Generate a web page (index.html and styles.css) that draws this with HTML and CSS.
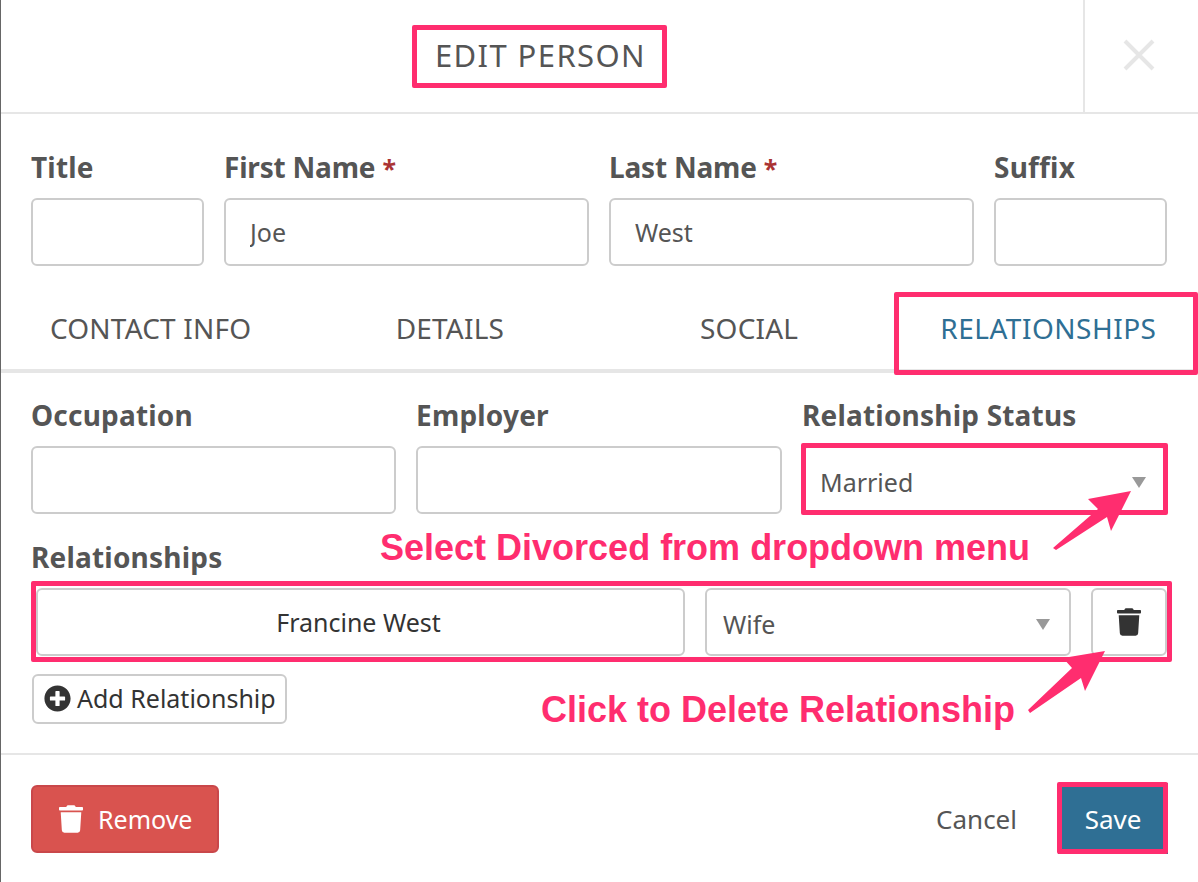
FILE: index.html
```html
<!DOCTYPE html>
<html lang="en">
<head>
	<meta charset="UTF-8">
	<meta name="viewport" content="width=device-width, initial-scale=1.0">
	<title>Edit Person</title>
	<link rel="stylesheet" href="styles.css">
</head>
<body>
	<div class="modal">
		<header class="modal-header">
			<h1 class="modal-title">EDIT PERSON</h1>
			<div class="modal-close">
				<svg viewBox="0 0 32 32" class="close-icon"><path d="M2 2 L30 30 M30 2 L2 30"/></svg>
			</div>
		</header>

		<div class="name-row">
			<div class="field">
				<label>Title</label>
				<input type="text">
			</div>
			<div class="field">
				<label class="required">First Name <span class="req">*</span></label>
				<input type="text" value="Joe">
			</div>
			<div class="field">
				<label class="required">Last Name <span class="req">*</span></label>
				<input type="text" value="West">
			</div>
			<div class="field">
				<label>Suffix</label>
				<input type="text">
			</div>
		</div>

		<nav class="tabs">
			<div class="tab">CONTACT INFO</div>
			<div class="tab">DETAILS</div>
			<div class="tab">SOCIAL</div>
			<div class="tab active">RELATIONSHIPS</div>
		</nav>

		<div class="info-row">
			<div class="field">
				<label>Occupation</label>
				<input type="text">
			</div>
			<div class="field">
				<label>Employer</label>
				<input type="text">
			</div>
			<div class="field">
				<label>Relationship Status</label>
				<div class="select">Married<span class="caret"></span></div>
			</div>
		</div>

		<div class="relationships">
			<label>Relationships</label>
			<div class="relationship-row">
				<div class="person-name">Francine West</div>
				<div class="select">Wife<span class="caret"></span></div>
				<div class="icon-btn">
					<svg viewBox="0 0 448 512" class="trash"><path d="M432 32H312l-9.4-18.7A24 24 0 0 0 281.1 0H166.8a23.72 23.72 0 0 0-21.4 13.3L136 32H16A16 16 0 0 0 0 48v32a16 16 0 0 0 16 16h416a16 16 0 0 0 16-16V48a16 16 0 0 0-16-16zM53.2 467a48 48 0 0 0 47.9 45h245.8a48 48 0 0 0 47.9-45L416 128H32z"/></svg>
				</div>
			</div>
			<button class="add-btn">
				<svg viewBox="0 0 512 512" class="plus"><path d="M256 8C119 8 8 119 8 256s111 248 248 248 248-111 248-248S393 8 256 8zm144 276c0 6.6-5.4 12-12 12h-92v92c0 6.6-5.4 12-12 12h-56c-6.6 0-12-5.4-12-12v-92h-92c-6.6 0-12-5.4-12-12v-56c0-6.6 5.4-12 12-12h92v-92c0-6.6 5.4-12 12-12h56c6.6 0 12 5.4 12 12v92h92c6.6 0 12 5.4 12 12v56z"/></svg>
				Add Relationship
			</button>
		</div>

		<footer class="modal-footer">
			<button class="remove-btn">
				<svg viewBox="0 0 448 512" class="trash-white"><path d="M432 32H312l-9.4-18.7A24 24 0 0 0 281.1 0H166.8a23.72 23.72 0 0 0-21.4 13.3L136 32H16A16 16 0 0 0 0 48v32a16 16 0 0 0 16 16h416a16 16 0 0 0 16-16V48a16 16 0 0 0-16-16zM53.2 467a48 48 0 0 0 47.9 45h245.8a48 48 0 0 0 47.9-45L416 128H32z"/></svg>
				Remove
			</button>
			<div class="footer-right">
				<a class="cancel">Cancel</a>
				<button class="save-btn">Save</button>
			</div>
		</footer>
	</div>

	<!-- annotations drawn on top of the screenshot -->
	<div class="mark mark-title"></div>
	<div class="mark mark-tab"></div>
	<div class="mark mark-status"></div>
	<div class="mark mark-row"></div>
	<div class="mark mark-save"></div>
	<div class="note note-status">Select Divorced from dropdown menu</div>
	<div class="note note-delete">Click to Delete Relationship</div>
	<svg class="arrows" viewBox="0 0 1198 882">
		<polygon points="1131,491 1111,531 1107,517 1056,550 1053,548 1098,509 1088,499"/>
		<polygon points="1105,651 1085,691 1081,678 1030,713 1028,710 1072,668 1063,658"/>
	</svg>
</body>
</html>
```

FILE: styles.css
```css
* {
	box-sizing: border-box;
}

html, body {
	margin: 0;
	height: 882px;
	overflow: hidden;
}

body {
	position: relative;
	background: #fff;
	font-family: "Noto Sans", Arial, sans-serif;
	color: #555;
}

.modal {
	width: 1198px;
	height: 882px;
	border-left: 1px solid #666;
	display: flex;
	flex-direction: column;
}

.modal-header {
	display: flex;
	height: 114px;
	border-bottom: 2px solid #e6e6e6;
}

.modal-title {
	flex: 1;
	margin: 0;
	padding-right: 3px;
	font-size: 31px;
	font-weight: 400;
	line-height: 110px;
	text-align: center;
	letter-spacing: 1.4px;
	color: #555;
}

.modal-close {
	width: 115px;
	border-left: 2px solid #e6e6e6;
	display: flex;
	align-items: center;
	padding-left: 38px;
}

.close-icon {
	width: 32px;
	height: 32px;
	margin-top: -2px;
	fill: none;
	stroke: #e6e6e6;
	stroke-width: 4;
}

label {
	display: block;
	height: 38px;
	font-size: 28px;
	font-weight: 700;
	line-height: 38px;
	letter-spacing: 0.2px;
	white-space: nowrap;
	color: #555;
}

label.required {
	letter-spacing: -0.2px;
}

.req {
	font-size: 25px;
	color: #a33;
}

input[type="text"] {
	display: block;
	width: 100%;
	height: 68px;
	padding: 0 24px;
	border: 2px solid #ccc;
	border-radius: 6px;
	font-family: inherit;
	font-size: 25px;
	color: #555;
	background: #fff;
}

.name-row {
	display: grid;
	grid-template-columns: 173px 365px 365px 173px;
	gap: 20px;
	padding: 34px 30px 0;
}

.field label {
	margin-bottom: 12px;
}

.tabs {
	display: grid;
	grid-template-columns: repeat(4, 1fr);
	margin-top: 26px;
	height: 81px;
	border-bottom: 4px solid #e6e6e6;
}

.tab {
	text-align: center;
	font-size: 28px;
	line-height: 73px;
	letter-spacing: 0.2px;
	color: #555;
}

.tab.active {
	letter-spacing: 0.5px;
	color: #2f6f94;
}

.info-row {
	display: grid;
	grid-template-columns: 365px 366px 365px;
	gap: 20px;
	padding: 23px 30px 0;
}

.select {
	position: relative;
	height: 68px;
	padding: 0 16px;
	border: 2px solid #ccc;
	border-radius: 6px;
	font-size: 25px;
	line-height: 68px;
	color: #555;
	background: #fff;
}

.caret {
	position: absolute;
	right: 19px;
	top: 29px;
	width: 0;
	height: 0;
	border-left: 7px solid transparent;
	border-right: 7px solid transparent;
	border-top: 11px solid #999;
}

.relationships {
	padding: 24px 30px 0;
}

.relationships label {
	margin-bottom: 12px;
}

.relationship-row {
	display: flex;
	gap: 20px;
	height: 68px;
	margin-left: 5px;
	margin-right: 1px;
}

.person-name {
	width: 649px;
	height: 68px;
	padding-right: 4px;
	border: 2px solid #ccc;
	border-radius: 6px;
	text-align: center;
	font-size: 25px;
	line-height: 64px;
	color: #333;
}

.relationship-row .select {
	width: 366px;
}

.icon-btn {
	width: 76px;
	height: 68px;
	border: 2px solid #ccc;
	border-radius: 6px;
	display: flex;
	align-items: center;
	justify-content: center;
}

.trash {
	width: 24px;
	height: 28px;
	fill: #333;
}

.add-btn {
	display: flex;
	align-items: center;
	gap: 6px;
	height: 50px;
	width: 255px;
	margin-top: 18px;
	margin-left: 1px;
	padding: 0 10px 2px;
	border: 2px solid #ccc;
	border-radius: 6px;
	background: #fff;
	font-family: inherit;
	font-size: 25px;
	white-space: nowrap;
	color: #333;
}

.plus {
	width: 27px;
	height: 27px;
	flex: none;
	fill: #333;
}

.modal-footer {
	display: flex;
	align-items: center;
	justify-content: space-between;
	height: 128px;
	margin-top: 29px;
	padding: 0 30px;
	border-top: 2px solid #e6e6e6;
}

.remove-btn {
	display: flex;
	align-items: center;
	gap: 15px;
	width: 188px;
	height: 68px;
	margin-top: 2px;
	padding: 0 26px;
	border: 2px solid #c9474a;
	border-radius: 6px;
	background: #d9534f;
	font-family: inherit;
	font-size: 25px;
	color: #fff;
}

.trash-white {
	width: 24px;
	height: 28px;
	flex: none;
	fill: #fff;
}

.footer-right {
	display: flex;
	align-items: center;
	gap: 41px;
}

.cancel {
	padding-top: 2px;
	font-size: 26px;
	color: #555;
}

.save-btn {
	width: 110px;
	height: 71px;
	padding-top: 3px;
	border: 0;
	background: #2f6f94;
	font-family: inherit;
	font-size: 26px;
	color: #fff;
}

/* annotations */
.mark {
	position: absolute;
	border: 5px solid #ff2d6f;
	border-radius: 2px;
}

.mark-title {
	left: 412px;
	top: 25px;
	width: 255px;
	height: 63px;
}

.mark-tab {
	left: 894px;
	top: 292px;
	width: 304px;
	height: 83px;
}

.mark-status {
	left: 801px;
	top: 443px;
	width: 367px;
	height: 72px;
}

.mark-row {
	left: 31px;
	top: 581px;
	width: 1141px;
	height: 81px;
}

.mark-save {
	left: 1057px;
	top: 782px;
	width: 111px;
	height: 72px;
}

.note {
	position: absolute;
	font-family: "Liberation Sans", Arial, sans-serif;
	font-weight: 700;
	font-size: 36px;
	line-height: 40px;
	color: #ff2d6f;
	white-space: nowrap;
}

.note-status {
	left: 380px;
	top: 528px;
}

.note-delete {
	left: 541px;
	top: 690px;
}

.arrows {
	position: absolute;
	left: 0;
	top: 0;
	width: 1198px;
	height: 882px;
	fill: #ff2d6f;
}
```
